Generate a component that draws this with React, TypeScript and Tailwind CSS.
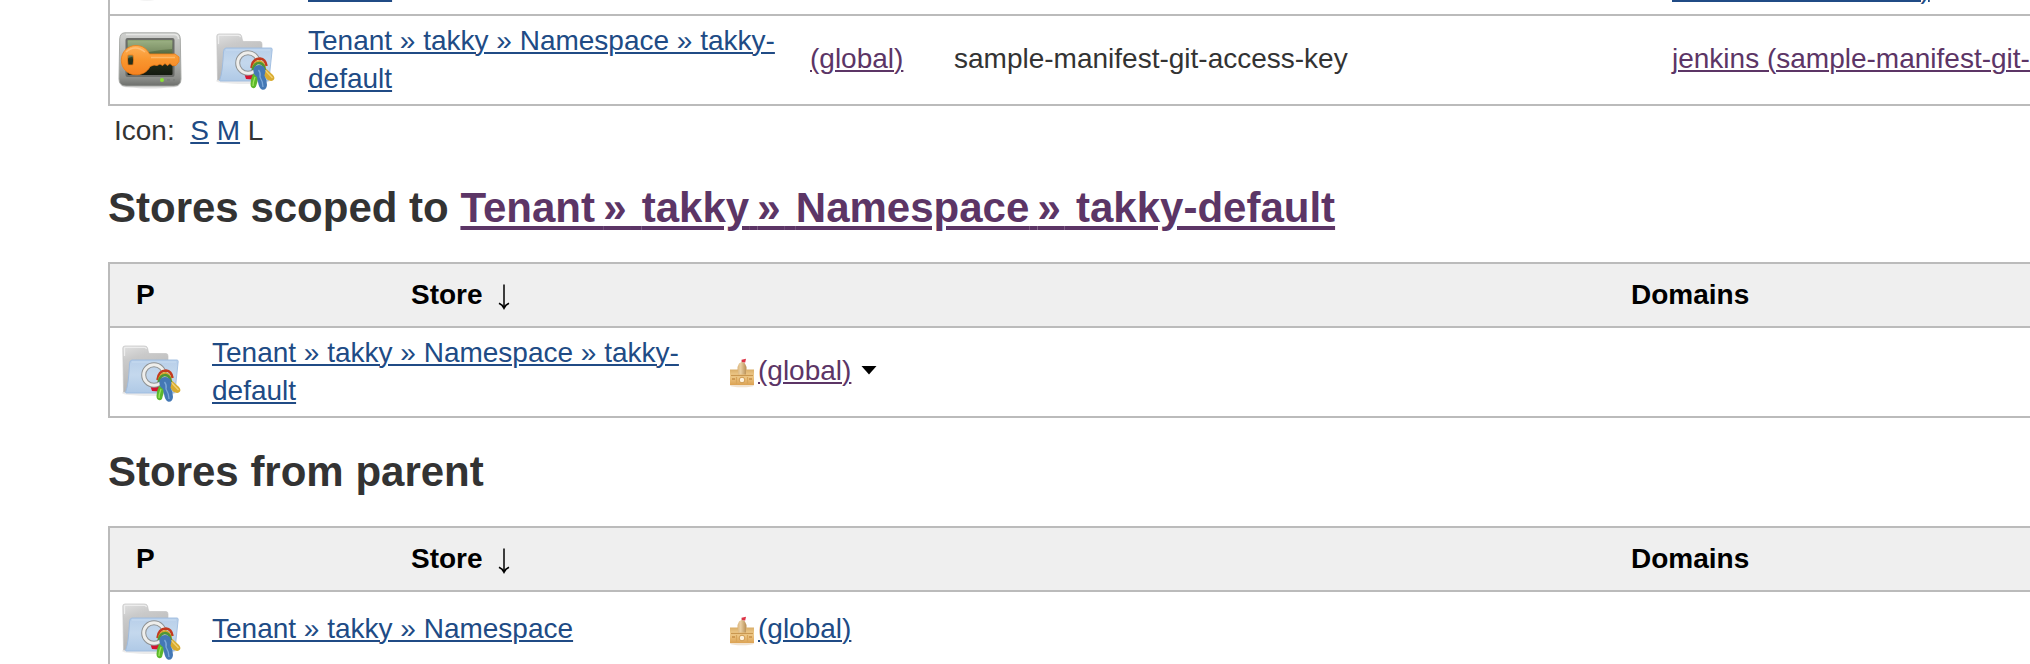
import { Fragment, type ReactNode } from "react";

const blue = "text-[#204b85] underline decoration-2 underline-offset-2";
const purple = "text-[#5c3566] underline decoration-2 underline-offset-2";

function KeyMonitorIcon() {
  return (
    <svg width="64" height="64" viewBox="0 0 64 64" className="shrink-0">
      <defs>
        <linearGradient id="km-body" x1="0" y1="0" x2="0" y2="1">
          <stop offset="0" stopColor="#cfd0ce" />
          <stop offset="0.5" stopColor="#b0b2ae" />
          <stop offset="0.85" stopColor="#8d8f8b" />
          <stop offset="1" stopColor="#6c6e6b" />
        </linearGradient>
        <linearGradient id="km-screen" x1="0" y1="0" x2="0" y2="1">
          <stop offset="0" stopColor="#8fa676" />
          <stop offset="0.4" stopColor="#53683f" />
          <stop offset="0.55" stopColor="#27331d" />
          <stop offset="1" stopColor="#151b10" />
        </linearGradient>
        <linearGradient id="km-key" x1="0" y1="0" x2="0" y2="1">
          <stop offset="0" stopColor="#fdaf56" />
          <stop offset="0.5" stopColor="#f9962e" />
          <stop offset="1" stopColor="#f58220" />
        </linearGradient>
      </defs>
      <ellipse cx="32" cy="57.500" rx="29" ry="3" fill="#000" opacity="0.12" />
      <path d="M7 4.800H57Q62 4.800 62.300 11L63 51Q63 58 56 58H8Q1 58 1 51L1.700 11Q2 4.800 7 4.800Z" fill="url(#km-body)" stroke="#a2a4a0" strokeWidth="0.900" />
      <path d="M8 6.500H56Q60.500 6.500 60.500 11" fill="none" stroke="#e6e7e5" strokeWidth="1.500" />
      <rect x="7.500" y="10" width="49" height="39" rx="2" fill="#6b6d69" />
      <rect x="9.500" y="12" width="45" height="35" rx="1" fill="url(#km-screen)" />
      <path d="M10 13H54V21Q32 22 10 30Z" fill="#b5c79e" opacity="0.35" />
      <circle cx="44" cy="52" r="2" fill="#8ae234" />
      <path d="M49 52H52M55 52H57" stroke="#7b7d79" strokeWidth="1.500" />
      <path
        fillRule="evenodd"
        d="M18 17.500C24 17.500 29 20.800 31.500 26H57L61 29V33.500L58 37.500H54L52 35.500L49.500 37.500L47 35.500L44.500 37.500L42 36L39 37.500L36 37L32 38.500C29.500 44 24 46.800 18 46.800C9.500 46.800 3.300 40.300 3.300 32.200C3.300 24 9.500 17.500 18 17.500ZM10 27Q9 32 10 37H15Q16.300 32 15 27Z"
        fill="url(#km-key)"
        stroke="#ef7d17"
        strokeWidth="0.800"
      />
      <path d="M8 24Q17 16 27 24" fill="none" stroke="#ffc887" strokeWidth="1.500" opacity="0.7" />
      <path d="M33 29.500H57" stroke="#ffb867" strokeWidth="1.500" />
    </svg>
  );
}

function ShadowIcon() {
  return (
    <svg width="64" height="64" viewBox="0 0 64 64" className="shrink-0">
      <ellipse cx="29" cy="60" rx="11" ry="3" fill="#000" opacity="0.050" />
    </svg>
  );
}

function FolderKeysIcon() {
  return (
    <svg width="64" height="64" viewBox="0 0 64 64" className="ml-px shrink-0">
      <defs>
        <linearGradient id="fk-back" x1="0" y1="0" x2="0.300" y2="1">
          <stop offset="0" stopColor="#e0e0e0" />
          <stop offset="0.300" stopColor="#cacaca" />
          <stop offset="1" stopColor="#b3b3b3" />
        </linearGradient>
        <linearGradient id="fk-front" x1="0" y1="0" x2="0" y2="1">
          <stop offset="0" stopColor="#b8cfe9" />
          <stop offset="0.450" stopColor="#c4d8ed" />
          <stop offset="1" stopColor="#afc9e6" />
        </linearGradient>
      </defs>
      <ellipse cx="30" cy="53" rx="27" ry="3" fill="#000" opacity="0.080" />
      <path d="M4.500 52L3.800 8Q3.800 6 6 6H25.500Q28 6 28.500 8L29.500 12.500Q30 13.500 31.500 13.500H47Q49 13.500 49 16V52Z" fill="url(#fk-back)" stroke="#c4c4c4" strokeWidth="0.700" />
      <path d="M5.500 16V8Q5.500 7.300 6.500 7.300H25.500Q27 7.300 27.500 9" fill="none" stroke="#ededed" strokeWidth="1.200" />
      <path d="M13 20H58Q59.300 20 59.200 21.500L56 51.500Q55.700 53 54 53H7Q6 53 7 51Q9.500 45 10.500 24Q10.700 20 13 20Z" fill="url(#fk-front)" stroke="#9dbbe0" strokeWidth="0.900" />
      <path d="M13 22H57" stroke="#c8dcf1" strokeWidth="1.200" />
      <path d="M31.500 46.500L41 45L40 51.500L33 51Z" fill="#d5122f" />
      <circle cx="35" cy="35" r="10.300" fill="none" stroke="#8f9293" strokeWidth="5" />
      <circle cx="35" cy="35" r="10.300" fill="none" stroke="#eeeeec" strokeWidth="3" />
      <path d="M49 37L60 47Q62.500 50 60.500 52Q58 54 54 51.500L46 41Z" fill="#d8ab2f" />
      <path d="M51 41L59.500 50" stroke="#f1d174" strokeWidth="1.300" />
      <path d="M40 46Q37.500 51 37.500 56Q37.500 60 40.500 60.200Q43 60.300 43.500 57L46 47Z" fill="#5cb82c" />
      <path d="M42 49Q40 54 40 58" fill="none" stroke="#9be45b" strokeWidth="1.300" />
      <path d="M38.500 40Q39.500 30.500 47 30.500Q52.500 31 53.500 38" fill="none" stroke="#c33b20" strokeWidth="2.600" />
      <path d="M39.500 41Q41 33 46.500 33Q51 34 52 40" fill="none" stroke="#dba62b" strokeWidth="1.800" />
      <path d="M39.500 42Q41 35 46.500 35Q51 35.500 52 42" fill="none" stroke="#4e9636" strokeWidth="2.400" />
      <path d="M40.500 41Q42 37 46 37Q51.500 37 52.500 43L51.500 47.500Q54 52 54 57Q53.500 62 49.500 61.700Q46 61 45 54L44 49Q39.500 46 40.500 41Z" fill="#4478b5" />
      <path d="M45.500 42Q48 45 47 49Q50 54 50 59" fill="none" stroke="#7ba8d9" strokeWidth="1.300" />
    </svg>
  );
}

function CastleIcon() {
  return (
    <svg width="32" height="32" viewBox="0 0 32 32" className="mt-[3px] shrink-0">
      <defs>
        <linearGradient id="cs-tower" x1="0" y1="0" x2="1" y2="0">
          <stop offset="0" stopColor="#dcb57b" />
          <stop offset="0.350" stopColor="#e9cfa3" />
          <stop offset="1" stopColor="#b78d52" />
        </linearGradient>
        <linearGradient id="cs-wall" x1="0" y1="0" x2="0" y2="1">
          <stop offset="0" stopColor="#d9ad68" />
          <stop offset="0.400" stopColor="#f0cc8d" />
          <stop offset="1" stopColor="#dca253" />
        </linearGradient>
      </defs>
      <ellipse cx="16" cy="28.500" rx="12" ry="1.800" fill="#c98b3a" opacity="0.250" />
      <path d="M16 9V3.500" stroke="#b9a48b" strokeWidth="1" />
      <path d="M15.500 2.800L20 1.800L19.200 5.500L16 5.500Z" fill="#dd3346" />
      <path d="M11.500 19V10L13 6.500Q16 3.500 19 6.500L20.500 10V19Z" fill="url(#cs-tower)" />
      <path d="M4 12.500H12V17.500H20V12.500H28V28H4Z" fill="url(#cs-wall)" />
      <path d="M5 18.500H27" stroke="#c99750" strokeWidth="1.200" />
      <path d="M10.500 20V27M21.500 20V27" stroke="#d8a55a" strokeWidth="1.200" />
      <path d="M6 22H9M23 22H26" stroke="#c58f47" strokeWidth="1.300" />
      <circle cx="16" cy="23" r="2.800" fill="#fdf1dc" stroke="#cf9a50" strokeWidth="1" />
    </svg>
  );
}

/* Item path for headings: the chevron sits close to the part before it */
function HeadingPath(props: { parts: string[] }) {
  return (
    <>
      {props.parts.map((part, i) => (
        <Fragment key={i}>
          {i > 0 && (
            <>
              <span className="tracking-[-3.500px]"> </span>
              <span className="tracking-[3.500px]">»</span>{" "}
            </>
          )}
          {part}
        </Fragment>
      ))}
    </>
  );
}

const columns = "grid shrink-0 grid-cols-[94px_96px_502px_144px_718px_1fr] border-b-2 border-[#bbb] pl-2";

function CredentialRow(props: { icon: ReactNode; path: string[]; name: string; link: string }) {
  return (
    <div className={`${columns} h-[90px] items-center`}>
      {props.icon}
      <FolderKeysIcon />
      <div className="w-[480px]">
        <a className={blue}>{props.path.join(" » ")}</a>
      </div>
      <a className={`${purple} pb-0.5`}>(global)</a>
      <span className="pb-0.5">{props.name}</span>
      <a className={`${purple} whitespace-nowrap pb-0.5`}>{props.link}</a>
    </div>
  );
}

function StoreTable(props: { children: ReactNode }) {
  return (
    <div className="w-[2200px] shrink-0 border-2 border-[#bbb]">
      <div className="grid h-16 grid-cols-[94px_516px_1fr] items-center border-b-2 border-[#bbb] bg-[#efefef] font-bold text-black">
        <span className="pl-[26px]">P</span>
        <span className="flex pl-[207px]">
          Store
          <svg width="12" height="38" viewBox="0 0 12 38" className="ml-[15px]" fill="none" stroke="#000" strokeWidth="1.500">
            <path d="M6 8.500V31" />
            <path d="M1 27.200Q4.500 28.800 6 32Q7.500 28.800 11 27.200" strokeWidth="1.800" />
          </svg>
        </span>
        <span className="pl-[911px]">Domains</span>
      </div>
      {props.children}
    </div>
  );
}

function StoreRow(props: { path: string[]; tall?: boolean; visited?: boolean }) {
  return (
    <div className={`grid grid-cols-[94px_514px_1fr] items-center pl-2 ${props.tall ? "h-[88px]" : "h-[76px]"}`}>
      <FolderKeysIcon />
      <div className={`w-[480px] ${props.tall ? "" : "pb-0.5"}`}>
        <a className={blue}>{props.path.join(" » ")}</a>
      </div>
      <div className="flex items-center pb-0.5">
        <CastleIcon />
        <a className={props.visited ? purple : blue}>(global)</a>
        {props.visited && (
          <svg width="16" height="10" viewBox="0 0 16 10" className="mb-0.5 ml-2.5">
            <path d="M0.500 1H15.500L8 9.500Z" fill="#000" />
          </svg>
        )}
      </div>
    </div>
  );
}

const fullPath = ["Tenant", "takky", "Namespace", "takky-default"];

export default function App() {
  return (
    <div className="flex h-[664px] w-full flex-col overflow-hidden bg-white pl-[108px] font-['Liberation_Sans',Arial,sans-serif] text-[28px] leading-[38px] text-[#333]">
      <div className="-mt-[74px] w-[2200px] shrink-0 border-l-2 border-[#bbb]">
        <div className={`${columns} h-[90px] items-end`}>
          <div className="self-center">
            <ShadowIcon />
          </div>
          <div className="self-center">
            <FolderKeysIcon />
          </div>
          <a className={`${blue} pb-1.5`}>default</a>
          <span />
          <span />
          <a className={`${blue} whitespace-nowrap pb-1.5 tracking-[-0.100px]`}>manifest-credentials)</a>
        </div>
        <CredentialRow
          icon={<KeyMonitorIcon />}
          path={fullPath}
          name="sample-manifest-git-access-key"
          link="jenkins (sample-manifest-git-access-key)"
        />
      </div>
      <div className="mt-1.5 flex shrink-0 whitespace-pre pl-1.5">
        <span>{"Icon:  "}</span>
        <a className={blue}>S</a>
        <span> </span>
        <a className={blue}>M</a>
        <span> L</span>
      </div>
      <h1 className="mt-[33px] h-[79px] shrink-0 whitespace-nowrap text-[42px] font-bold leading-[50px]">
        Stores scoped to{" "}
        <a className="text-[#5c3566] underline decoration-4 underline-offset-4">
          <HeadingPath parts={fullPath} />
        </a>
      </h1>
      <StoreTable>
        <StoreRow path={fullPath} tall visited />
      </StoreTable>
      <h1 className="mt-[29px] h-[79px] shrink-0 whitespace-nowrap text-[42px] font-bold leading-[50px]">Stores from parent</h1>
      <StoreTable>
        <StoreRow path={["Tenant", "takky", "Namespace"]} />
      </StoreTable>
    </div>
  );
}
